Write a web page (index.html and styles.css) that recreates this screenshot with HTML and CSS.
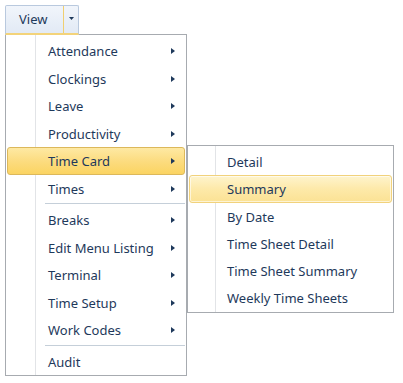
FILE: index.html
```html
<!DOCTYPE html>
<html lang="en">
<head>
    <meta charset="UTF-8">
    <meta name="viewport" content="width=device-width, initial-scale=1.0">
    <title>View menu</title>
    <link rel="stylesheet" href="styles.css">
</head>
<body>
    <div class="toolbar">
        <div class="split-button open">
            <span class="split-label">View</span>
            <span class="split-drop">
                <svg width="5" height="3" viewBox="0 0 5 3"><path d="M0 0H5L2.5 3Z" fill="#1e395b"/></svg>
            </span>
        </div>

        <div class="menu main-menu">
            <div class="item has-sub">Attendance</div>
            <div class="item has-sub">Clockings</div>
            <div class="item has-sub">Leave</div>
            <div class="item has-sub">Productivity</div>
            <div class="item has-sub active">Time Card
                <div class="menu sub-menu">
                    <div class="item">Detail</div>
                    <div class="item hover">Summary</div>
                    <div class="item">By Date</div>
                    <div class="item">Time Sheet Detail</div>
                    <div class="item">Time Sheet Summary</div>
                    <div class="item">Weekly Time Sheets</div>
                </div>
            </div>
            <div class="item has-sub">Times</div>
            <div class="separator"></div>
            <div class="item has-sub">Breaks</div>
            <div class="item has-sub">Edit Menu Listing</div>
            <div class="item has-sub">Terminal</div>
            <div class="item has-sub">Time Setup</div>
            <div class="item has-sub">Work Codes</div>
            <div class="separator"></div>
            <div class="item">Audit</div>
        </div>
    </div>
</body>
</html>
```

FILE: styles.css
```css
* {
    margin: 0;
    padding: 0;
    box-sizing: border-box;
}

body {
    background-color: #fff;
    font-family: "Noto Sans", "Liberation Sans", sans-serif;
    font-size: 13px;
    color: #1e395b;
}

.toolbar {
    position: relative;
    padding: 5px 0 0 5px;
    height: 383px;
}

/* split button "View" */
.split-button {
    position: relative;
    z-index: 2;
    display: flex;
    width: 74px;
    height: 30px;
    border: 1px solid #b9c9de;
    border-bottom: 2px solid #f3d37a;
    border-radius: 2px 2px 0 0;
    background: linear-gradient(#f1f5fb, #e2eaf5);
}

.split-label {
    display: flex;
    align-items: center;
    width: 58px;
    padding-left: 13px;
    padding-bottom: 1px;
    border-right: 1px solid #f0cf70;
}

.split-drop {
    flex: 1;
    display: flex;
    align-items: center;
    justify-content: center;
    padding-bottom: 2px;
}

.split-drop svg {
    display: block;
}

/* menus */
.menu {
    position: absolute;
    background: linear-gradient(90deg, #fff 29px, #e2e4e7 29px, #e2e4e7 30px, #fff 30px);
    border: 1px solid #a7abb0;
    padding: 2px 1px 0 1px;
}

.main-menu {
    top: 34px;
    left: 5px;
    width: 182px;
    z-index: 1;
}

.sub-menu {
    top: -3px;
    left: 179px;
    width: 207px;
    background: linear-gradient(90deg, #fff 27px, #e2e4e7 27px, #e2e4e7 28px, #fff 28px);
}

.sub-menu .item {
    height: 27.3px;
    padding-left: 37px;
}

.item {
    position: relative;
    height: 27.5px;
    line-height: 26px;
    padding-left: 40px;
    border: 1px solid transparent;
    border-radius: 3px;
    white-space: nowrap;
}

.has-sub::after {
    content: "";
    position: absolute;
    right: 9px;
    top: 10px;
    border-top: 3.5px solid transparent;
    border-bottom: 3.5px solid transparent;
    border-left: 4px solid #1e395b;
}

.item.active {
    border-color: #dcb85b;
    background: linear-gradient(#fee9a3, #fcdc80 50%, #fbd462);
}

.item.hover {
    border-color: #f1d27c;
    background: linear-gradient(#fef4cd, #fde9a9 50%, #fbe294);
    box-shadow: inset 0 0 0 1px rgba(255, 255, 255, 0.6);
}

.separator {
    height: 4px;
    margin-left: 38px;
    padding-top: 1px;
}

.separator::before {
    content: "";
    display: block;
    height: 1px;
    background-color: #c5cfd9;
}
```
